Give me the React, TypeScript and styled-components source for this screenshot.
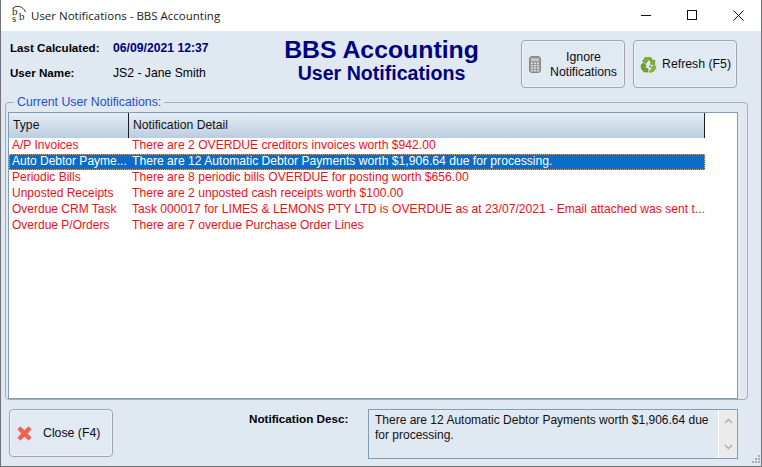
import React from "react";
import styled, { createGlobalStyle } from "styled-components";

const GlobalStyle = createGlobalStyle`
  html, body {
    margin: 0;
    padding: 0;
    overflow: hidden;
    background: #e0e8f2;
  }
  * {
    box-sizing: border-box;
  }
`;

const Win = styled.div`
  position: relative;
  width: 762px;
  height: 467px;
  display: flex;
  flex-direction: column;
  background: #e0e8f2;
  border: 1px solid #6f7276;
  border-top: none;
  font-family: "Liberation Sans", Arial, sans-serif;
  font-size: 12px;
  color: #000;
  overflow: hidden;
`;

const TitleBar = styled.div`
  height: 31px;
  flex: none;
  display: flex;
  align-items: center;
  background: #fff;
  padding-left: 9px;
`;

const TitleText = styled.span`
  margin-left: 3px;
  font-family: "Open Sans", "Liberation Sans", sans-serif;
  font-size: 11.5px;
  color: #1a1a1a;
`;

const WinControls = styled.div`
  margin-left: auto;
  display: flex;
`;

const WinBtn = styled.div`
  width: 46px;
  height: 31px;
  display: flex;
  align-items: center;
  justify-content: center;
`;

const Header = styled.div`
  display: grid;
  grid-template-columns: 232px 279px 216px;
  padding: 9px 0 0 9px;
  height: 64px;
  flex: none;
`;

const InfoBlock = styled.div`
  display: grid;
  grid-template-columns: 103px 1fr;
  grid-auto-rows: 25px;
  padding-top: 1px;
`;

const InfoLabel = styled.div`
  font-weight: bold;
  font-size: 11.6px;
  line-height: 14px;
`;

const InfoValue = styled.div<{ $strong?: boolean }>`
  line-height: 14px;
  font-size: 12.2px;
  font-weight: ${(p) => (p.$strong ? "bold" : "normal")};
  color: ${(p) => (p.$strong ? "#000080" : "#000")};
`;

const Heading = styled.div`
  text-align: center;
  color: #000080;
  font-weight: bold;
`;

const HeadingMain = styled.div`
  font-size: 24.8px;
  line-height: 24px;
  margin-top: -3px;
  padding-top: 1px;
`;

const HeadingSub = styled.div`
  font-size: 19.6px;
  line-height: 23px;
`;

const ButtonRow = styled.div`
  display: flex;
  gap: 8px;
`;

const ActionButton = styled.div`
  width: 104px;
  height: 48px;
  flex: none;
  display: flex;
  align-items: center;
  border: 1px solid #a3a5a8;
  border-radius: 4px;
  background: #e1e9f3;
  box-shadow: inset 0 0 0 1px #edf2f8;
  font-size: 12.3px;
  line-height: 15px;
  color: #0c0c18;
`;

const ButtonIcon = styled.span<{ $pad: number; $gap: number }>`
  display: flex;
  flex: none;
  margin-left: ${(p) => p.$pad}px;
  margin-right: ${(p) => p.$gap}px;
`;

const ButtonLabel = styled.span`
  text-align: center;
  white-space: nowrap;
  padding-top: 1px;
`;

const Group = styled.fieldset`
  margin: 0 13px 0 4px;
  height: 305px;
  flex: none;
  padding: 0 9px 0 2px;
  border: 1px solid #a9adb2;
  border-radius: 4px;
  min-width: 0;
`;

const GroupLegend = styled.legend`
  margin-left: 6px;
  padding: 0 3px;
  color: #2250cc;
  font-size: 12.3px;
  line-height: 14px;
`;

const ListBox = styled.div`
  height: 287px;
  margin-top: 3px;
  background: #fff;
  border: 1px solid #7f9db9;
  overflow: hidden;
`;

const HeadRow = styled.div`
  display: flex;
  width: 696px;
  height: 25px;
  background: linear-gradient(#e6edf5, #bccde0);
`;

const HeadCell = styled.div<{ $w: number }>`
  width: ${(p) => p.$w}px;
  flex: none;
  padding-left: 4px;
  font-size: 12.2px;
  line-height: 24px;
  border-right: 1px solid #1c1c1c;
  color: #111;
`;

const Row = styled.div<{ $selected?: boolean }>`
  display: flex;
  width: 696px;
  height: 16px;
  line-height: 15px;
  color: ${(p) => (p.$selected ? "#fff" : "#fb0a14")};
  background: ${(p) => (p.$selected ? "#0a6cc8" : "transparent")};
  outline: ${(p) => (p.$selected ? "1px dotted #f0a040" : "none")};
  outline-offset: -1px;
  white-space: nowrap;
`;

const TypeCell = styled.div`
  width: 120px;
  flex: none;
  padding-left: 3px;
  overflow: hidden;
`;

const DetailCell = styled.div`
  width: 576px;
  flex: none;
  padding-left: 3px;
  font-size: 12.15px;
  overflow: hidden;
`;

const Footer = styled.div`
  display: flex;
  padding: 9px 0 0 8px;
`;

const DescLabel = styled.div`
  margin-left: 136px;
  width: 119px;
  flex: none;
  font-weight: bold;
  font-size: 11.7px;
  line-height: 14px;
  padding-top: 3px;
`;

const DescBox = styled.div`
  width: 370px;
  height: 50px;
  flex: none;
  display: flex;
  border: 1px solid #7f9db9;
`;

const DescText = styled.div`
  flex: 1;
  padding: 3px 0 0 6px;
  line-height: 15px;
  color: #111;
`;

const ScrollTrack = styled.div`
  width: 19px;
  flex: none;
  display: flex;
  flex-direction: column;
  justify-content: space-between;
  align-items: center;
  padding: 8px 0;
  background: #ebebeb;
  border-left: 1px solid #fff;
`;

const Grip = styled.svg`
  position: absolute;
  right: 0;
  bottom: 0;
`;

const rows = [
  ["A/P Invoices", "There are 2 OVERDUE creditors invoices worth $942.00"],
  ["Auto Debtor Payme...", "There are 12 Automatic Debtor Payments worth $1,906.64 due for processing."],
  ["Periodic Bills", "There are 8 periodic bills OVERDUE for posting worth $656.00"],
  ["Unposted Receipts", "There are 2 unposted cash receipts worth $100.00"],
  ["Overdue CRM Task", "Task 000017 for LIMES & LEMONS PTY LTD is OVERDUE as at 23/07/2021 - Email attached was sent t..."],
  ["Overdue P/Orders", "There are 7 overdue Purchase Order Lines"],
];

const Logo = () => (
  <svg width="18" height="22" viewBox="0 0 18 22">
    <path d="M3 3 C7 0 13 1 15.5 7" fill="none" stroke="#333" strokeWidth="1" />
    <text x="2" y="10" fontFamily="Liberation Serif, serif" fontSize="11" fill="#222">b</text>
    <text x="2" y="17" fontFamily="Liberation Serif, serif" fontSize="11" fill="#222">s</text>
    <text x="9" y="15" fontFamily="Liberation Serif, serif" fontSize="11" fill="#222">b</text>
  </svg>
);

const CalcIcon = () => (
  <svg width="12" height="17" viewBox="0 0 12 17">
    <rect x="0.5" y="0.5" width="11" height="16" rx="2.5" fill="#9a9c9b" stroke="#858786" />
    <rect x="2" y="2.5" width="8" height="2.5" fill="#c9cac8" />
    {[6.5, 9, 11.5, 14].map((y) =>
      [2, 5, 8].map((x) => <rect key={`${x}-${y}`} x={x} y={y} width="2" height="1.5" fill="#d6d6d4" />)
    )}
  </svg>
);

const RecycleIcon = () => (
  <svg width="17" height="17" viewBox="0 0 17 17">
    <path d="M5 1.5 H11 L13 5 L15 4 L14.5 9 L10 8 L11.5 7 L8.5 3.5 L6 7.5 L2.5 5.5 Z" fill="#7fae2c" stroke="#5f8f1a" strokeWidth="0.6" />
    <path d="M1 9 L3 7 L6.5 9.5 L5 10.5 L6.5 12.5 H8 V16 H4 L1.5 13 Z" fill="#73a326" stroke="#5f8f1a" strokeWidth="0.6" />
    <path d="M9.5 11 V9.5 L12.5 12 L9.5 15 V16.5 L13.5 15.5 L16 12 L15 9.5 L11.5 11 Z" fill="#8ab836" stroke="#5f8f1a" strokeWidth="0.6" />
  </svg>
);

const CloseIcon = () => (
  <svg width="15" height="15" viewBox="0 0 15 15">
    <path
      d="M3.2 0.8 L7.5 4.6 L11.8 0.8 L14.2 3.2 L10.4 7.5 L14.2 11.8 L11.8 14.2 L7.5 10.4 L3.2 14.2 L0.8 11.8 L4.6 7.5 L0.8 3.2 Z"
      fill="#f0604c"
      stroke="#e4776c"
      strokeWidth="1"
      strokeLinejoin="round"
    />
  </svg>
);

function App() {
  return (
    <Win>
      <GlobalStyle />
      <TitleBar>
        <Logo />
        <TitleText>User Notifications - BBS Accounting</TitleText>
        <WinControls>
          <WinBtn>
            <svg width="11" height="11" viewBox="0 0 11 11">
              <path d="M0 5.5H10" stroke="#111" />
            </svg>
          </WinBtn>
          <WinBtn>
            <svg width="11" height="11" viewBox="0 0 11 11">
              <rect x="0.5" y="0.5" width="9" height="9" fill="none" stroke="#111" />
            </svg>
          </WinBtn>
          <WinBtn>
            <svg width="11" height="11" viewBox="0 0 11 11">
              <path d="M0.5 0.5L10.5 10.5M10.5 0.5L0.5 10.5" stroke="#111" />
            </svg>
          </WinBtn>
        </WinControls>
      </TitleBar>
      <Header>
        <InfoBlock>
          <InfoLabel>Last Calculated:</InfoLabel>
          <InfoValue $strong>06/09/2021 12:37</InfoValue>
          <InfoLabel>User Name:</InfoLabel>
          <InfoValue>JS2 - Jane Smith</InfoValue>
        </InfoBlock>
        <Heading>
          <HeadingMain>BBS Accounting</HeadingMain>
          <HeadingSub>User Notifications</HeadingSub>
        </Heading>
        <ButtonRow>
          <ActionButton>
            <ButtonIcon $pad={7} $gap={9}>
              <CalcIcon />
            </ButtonIcon>
            <ButtonLabel>
              Ignore
              <br />
              Notifications
            </ButtonLabel>
          </ActionButton>
          <ActionButton>
            <ButtonIcon $pad={6} $gap={5}>
              <RecycleIcon />
            </ButtonIcon>
            <ButtonLabel>Refresh (F5)</ButtonLabel>
          </ActionButton>
        </ButtonRow>
      </Header>
      <Group>
        <GroupLegend>Current User Notifications:</GroupLegend>
        <ListBox>
          <HeadRow>
            <HeadCell $w={120}>Type</HeadCell>
            <HeadCell $w={576}>Notification Detail</HeadCell>
          </HeadRow>
          {rows.map(([type, detail], i) => (
            <Row key={type} $selected={i === 1}>
              <TypeCell>{type}</TypeCell>
              <DetailCell>{detail}</DetailCell>
            </Row>
          ))}
        </ListBox>
      </Group>
      <Footer>
        <ActionButton>
          <ButtonIcon $pad={7} $gap={11}>
            <CloseIcon />
          </ButtonIcon>
          <ButtonLabel>Close (F4)</ButtonLabel>
        </ActionButton>
        <DescLabel>Notification Desc:</DescLabel>
        <DescBox>
          <DescText>There are 12 Automatic Debtor Payments worth $1,906.64 due for processing.</DescText>
          <ScrollTrack>
            <svg width="9" height="6" viewBox="0 0 9 6">
              <path d="M1 5L4.5 1.5L8 5" fill="none" stroke="#b4b4b4" strokeWidth="1.6" />
            </svg>
            <svg width="9" height="6" viewBox="0 0 9 6">
              <path d="M1 1L4.5 4.5L8 1" fill="none" stroke="#b4b4b4" strokeWidth="1.6" />
            </svg>
          </ScrollTrack>
        </DescBox>
      </Footer>
      <Grip width="12" height="12" viewBox="0 0 12 12">
        {[
          [9, 1],
          [6, 4],
          [9, 4],
          [3, 7],
          [6, 7],
          [9, 7],
        ].map(([x, y]) => (
          <rect key={`${x}-${y}`} x={x} y={y} width="2" height="2" fill="#a8acb0" />
        ))}
      </Grip>
    </Win>
  );
}

export default App;
